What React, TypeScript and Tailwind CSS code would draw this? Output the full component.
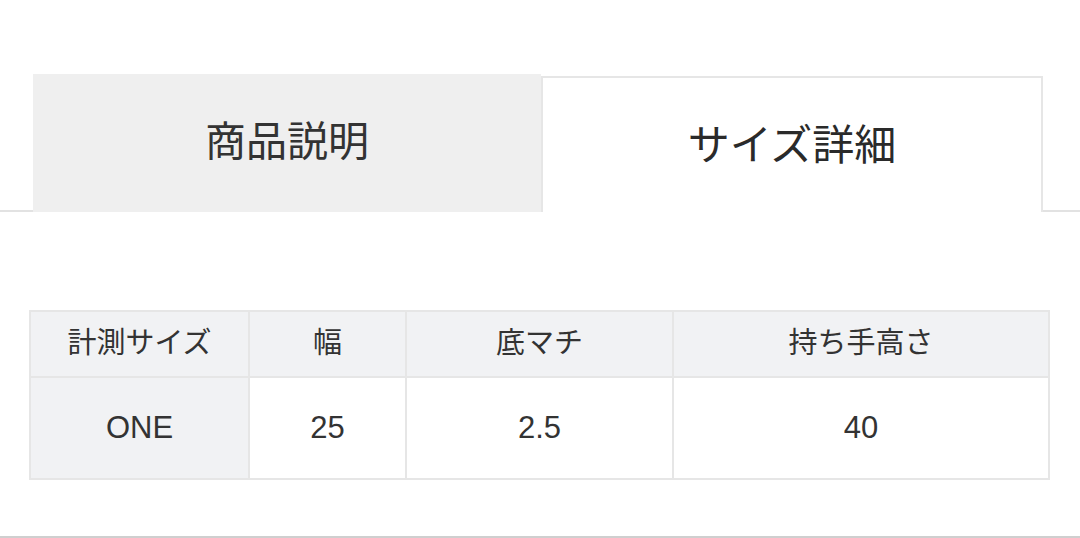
import React from 'react';

const font = { fontFamily: '"Liberation Sans", "Noto Sans CJK JP", sans-serif' };

const headers = ['計測サイズ', '幅', '底マチ', '持ち手高さ'];
const values = ['ONE', '25', '2.5', '40'];
const widths = ['w-[219px]', 'w-[157px]', 'w-[267px]', 'w-[376px]'];

export default function App() {
  return (
    <div className="w-[1080px] h-[538px] bg-white flex flex-col text-[#333]" style={font}>
      {/* タブ */}
      <div className="mt-[74px] flex h-[138px]">
        <div className="w-[33px] border-b-2 border-[#e2e2e2]" />
        <div className="w-[508px] bg-[#efefef] flex items-center justify-center text-[41px] text-[#333]">
          商品説明
        </div>
        <div className="w-[502px] mt-[2px] bg-white border-x-2 border-t-2 border-[#e6e6e6] flex items-center justify-center text-[42px] text-[#2a2a2a]">
          サイズ詳細
        </div>
        <div className="flex-1 border-b-2 border-[#e2e2e2]" />
      </div>

      {/* サイズ表 */}
      <div className="mt-[98px] ml-[29px]">
        <table className="border-collapse border-2 border-[#e6e6e6]">
          <tbody>
            <tr className="h-[66px] bg-[#f1f2f4]">
              {headers.map((h, i) => (
                <td
                  key={h}
                  className={`${widths[i]} border-2 border-[#e6e6e6] text-center text-[29px] p-0`}
                >
                  {h}
                </td>
              ))}
            </tr>
            <tr className="h-[102px]">
              {values.map((v, i) => (
                <td
                  key={i}
                  className={`${widths[i]} border-2 border-[#e6e6e6] text-center text-[31px] p-0 ${
                    i === 0 ? 'bg-[#f1f2f4]' : 'bg-white'
                  }`}
                >
                  {v}
                </td>
              ))}
            </tr>
          </tbody>
        </table>
      </div>

      <div className="flex-1 border-b-2 border-[#cfcfcf]" />
    </div>
  );
}
